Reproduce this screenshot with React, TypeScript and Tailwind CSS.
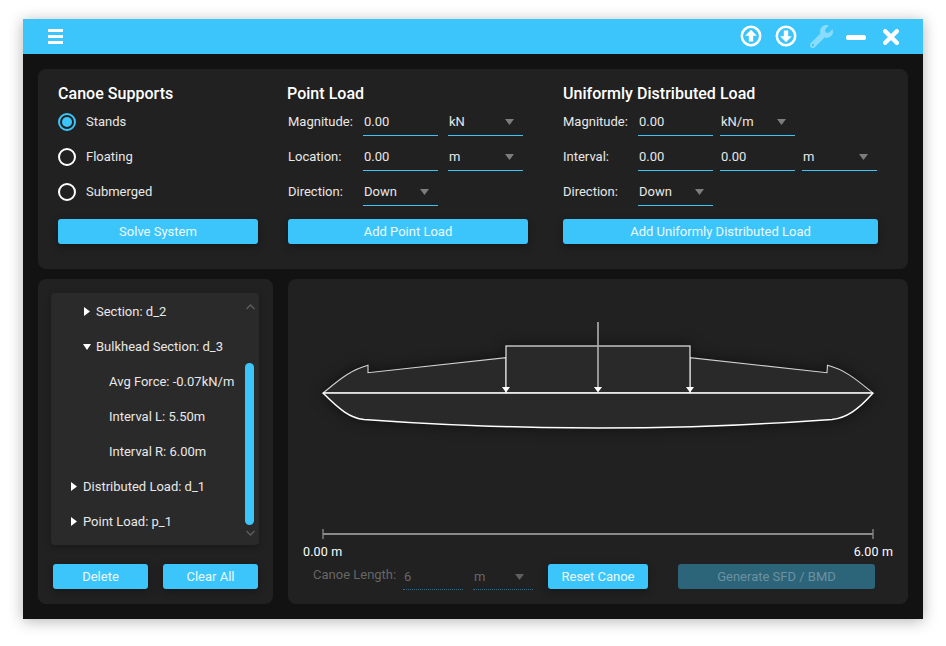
import React from "react";
import { FaWrench } from "react-icons/fa";

const BLUE = "bg-[#3cc5fb]";

const Btn = ({ label, className = "" }: { label: string; className?: string }) => (
  <button
    className={`h-[25px] rounded-[3px] ${BLUE} text-[13px] text-white/90 shadow-[0_3px_8px_rgba(0,0,0,0.3)] ${className}`}
  >
    {label}
  </button>
);

const Caret = ({ dim = false }: { dim?: boolean }) => (
  <svg width="9" height="6" viewBox="0 0 9 6" className="shrink-0">
    <path d="M0 0H9L4.5 6Z" fill={dim ? "#5f5f5f" : "#7d7d7d"} />
  </svg>
);

// text field / combo box with the blue underline
const Field = ({
  value,
  w = "w-[75px]",
  caret = false,
  disabled = false,
  className = "",
}: {
  value: string;
  w?: string;
  caret?: boolean;
  disabled?: boolean;
  className?: string;
}) => (
  <div
    className={`flex h-[26px] items-center justify-between border-b pl-[1px] pr-[9px] text-[13px] ${w} ${
      disabled ? "border-dotted border-[#22708e] text-[#666666]" : "border-[#3cc5fb] pb-[2px] text-[#e8e8e8]"
    } ${className}`}
  >
    <span>{value}</span>
    {caret && <Caret dim={disabled} />}
  </div>
);

const Row = ({ label, children }: { label: string; children: React.ReactNode }) => (
  <div className="mb-[9px] flex h-[26px] items-center text-[13px] text-[#e8e8e8]">
    <span className="w-[75px] pb-[2px]">{label}</span>
    {children}
  </div>
);

const Title = ({ children, className = "" }: { children: React.ReactNode; className?: string }) => (
  <h3 className={`mb-[6px] h-[20px] text-[16px] leading-[20px] font-medium tracking-[0.03px] text-white ${className}`}>
    {children}
  </h3>
);

const Radio = ({ label, checked = false }: { label: string; checked?: boolean }) => (
  <div className="mb-[11px] flex h-[24px] items-center gap-[10px] text-[13px] text-[#e8e8e8]">
    <span
      className={`flex size-[18px] items-center justify-center rounded-full border-2 ${
        checked ? "border-[#3cc5fb]" : "border-white"
      }`}
    >
      {checked && <span className={`size-[10px] rounded-full ${BLUE}`} />}
    </span>
    {label}
  </div>
);

const TreeRow = ({
  label,
  indent,
  arrow,
}: {
  label: string;
  indent: string;
  arrow?: "right" | "down";
}) => (
  <div className={`flex h-[35px] items-center gap-[6px] text-[13px] text-[#e8e8e8] ${indent}`}>
    {arrow === "right" && (
      <svg width="6" height="9" viewBox="0 0 6 9">
        <path d="M0 0L6 4.5L0 9Z" fill="#fff" />
      </svg>
    )}
    {arrow === "down" && (
      <svg width="8" height="6" viewBox="0 0 8 6" className="mr-[-1px] ml-[-1px]">
        <path d="M0 0H8L4 6Z" fill="#fff" />
      </svg>
    )}
    <span>{label}</span>
  </div>
);

const CircleArrow = ({ up }: { up?: boolean }) => (
  <svg width="22" height="22" viewBox="0 0 22 22" fill="none" className="mb-[1px]">
    <circle cx="11" cy="11" r="9.2" stroke="#fff" strokeWidth="2.5" />
    <g transform={up ? undefined : "rotate(180 11 11)"}>
      <path d="M11 4.8L16.8 10.8H13.2V16.6H8.8V10.8H5.2Z" fill="#fff" />
    </g>
  </svg>
);

// canoe drawing, viewBox uses the same coords as the window so points are easy to read off
const CanoeDiagram = () => (
  <svg viewBox="288 279 620 265" className="block h-[265px] w-[620px]" fill="none">
    <g className="drop-shadow-[0_0_7px_rgba(0,0,0,0.55)]">
      <path
        d="M323 393C338 381 350 370 368 365.3V372.7L506 357.7V393Z"
        fill="#292929"
        stroke="#d4d4d4"
        strokeWidth="1.1"
      />
      <path
        d="M873 393C858 381 846 370 827.5 365.3L827 372.7L690 357.7V393Z"
        fill="#292929"
        stroke="#d4d4d4"
        strokeWidth="1.1"
      />
      <rect x="506" y="346" width="184" height="47" fill="#292929" stroke="#e8e8e8" strokeWidth="1.2" />
      <path
        d="M323 393C340 410 350 418 364 419.4C440 425 530 428 598 428C666 428 756 425 832 419.4C846 418 858 410 873 393Z"
        fill="#292929"
      />
      <path
        d="M323 393C340 410 350 418 364 419.4C440 425 530 428 598 428C666 428 756 425 832 419.4C846 418 858 410 873 393"
        stroke="#fff"
        strokeWidth="1.5"
      />
    </g>
    <path d="M323 393H873" stroke="#fff" strokeWidth="1.7" />
    <path d="M598 322V388" stroke="#a8a8a8" strokeWidth="1.7" />
    <path d="M594 387H602L598 392.5Z" fill="#fff" />
    <path d="M502 387H510L506 392.5Z" fill="#fff" />
    <path d="M686 387H694L690 392.5Z" fill="#fff" />
    {/* length scale */}
    <path d="M323 534H873" stroke="#8a8a8a" strokeWidth="1.8" />
    <path d="M323 529V539M873 529V539" stroke="#8a8a8a" strokeWidth="1.3" />
  </svg>
);

export default function App() {
  return (
    <div className="min-h-[646px] bg-white pt-[19px] pl-[23px] font-['Roboto',sans-serif]">
      <div className="h-[600px] w-[900px] bg-[#121212] shadow-[0_2px_14px_rgba(0,0,0,0.3)]">
        {/* title bar */}
        <header className={`flex h-[35px] items-center ${BLUE}`}>
          <div className="mb-[1px] ml-[25px] flex w-[15px] flex-col gap-[3px]">
            <span className="h-[3px] bg-white" />
            <span className="h-[3px] bg-white" />
            <span className="h-[3px] bg-white" />
          </div>
          <div className="ml-auto flex items-center">
            <CircleArrow up />
            <span className="w-[13px]" />
            <CircleArrow />
            <FaWrench className="ml-[13px] size-[23px] text-white/40" />
            <span className="mt-[2px] ml-[13px] h-[5px] w-[20px] rounded-[2px] bg-white" />
            <svg width="16" height="16" viewBox="0 0 16 16" className="mt-[1px] mr-[24px] ml-[17px]">
              <path d="M2.2 2.2L13.8 13.8M13.8 2.2L2.2 13.8" stroke="#fff" strokeWidth="4.4" strokeLinecap="round" />
            </svg>
          </div>
        </header>

        <main className="flex flex-col gap-[10px] px-[15px] pt-[15px]">
          {/* inputs panel */}
          <section className="flex h-[200px] rounded-[8px] bg-[#212121] pt-[15px] pl-[20px]">
            <div className="mr-[30px] w-[200px]">
              <Title>Canoe Supports</Title>
              <Radio label="Stands" checked />
              <Radio label="Floating" />
              <Radio label="Submerged" />
              <Btn label="Solve System" className="mt-[4px] w-[200px]" />
            </div>

            <div className="mr-[35px] w-[240px]">
              <Title className="ml-[-1px]">Point Load</Title>
              <Row label="Magnitude:">
                <Field value="0.00" />
                <Field value="kN" caret className="ml-[10px]" />
              </Row>
              <Row label="Location:">
                <Field value="0.00" />
                <Field value="m" caret className="ml-[10px]" />
              </Row>
              <Row label="Direction:">
                <Field value="Down" caret />
              </Row>
              <Btn label="Add Point Load" className="mt-[4px] w-[240px]" />
            </div>

            <div className="w-[315px]">
              <Title>Uniformly Distributed Load</Title>
              <Row label="Magnitude:">
                <Field value="0.00" />
                <Field value="kN/m" caret className="ml-[7px]" />
              </Row>
              <Row label="Interval:">
                <Field value="0.00" />
                <Field value="0.00" className="ml-[7px]" />
                <Field value="m" caret className="ml-[7px]" />
              </Row>
              <Row label="Direction:">
                <Field value="Down" caret />
              </Row>
              <Btn label="Add Uniformly Distributed Load" className="mt-[4px] w-[315px]" />
            </div>
          </section>

          <div className="flex h-[325px] gap-[15px]">
            {/* load tree */}
            <section className="flex w-[235px] flex-col rounded-[8px] bg-[#212121] pt-[14px]">
              <div className="relative ml-[13px] h-[252px] w-[208px] rounded-[4px] bg-[#2a2a2a] pt-[1px] shadow-[0_2px_6px_rgba(0,0,0,0.25)]">
                <TreeRow label="Section: d_2" indent="pl-[33px]" arrow="right" />
                <TreeRow label="Bulkhead Section: d_3" indent="pl-[33px]" arrow="down" />
                <TreeRow label="Avg Force: -0.07kN/m" indent="pl-[58px]" />
                <TreeRow label="Interval L: 5.50m" indent="pl-[58px]" />
                <TreeRow label="Interval R: 6.00m" indent="pl-[58px]" />
                <TreeRow label="Distributed Load: d_1" indent="pl-[20px]" arrow="right" />
                <TreeRow label="Point Load: p_1" indent="pl-[20px]" arrow="right" />
                <svg width="9" height="6" viewBox="0 0 9 6" fill="none" className="absolute top-[11px] left-[195px]">
                  <path d="M.5 5L4.5 1L8.5 5" stroke="#5e5e5e" strokeWidth="1.3" />
                </svg>
                <span className={`absolute top-[70px] left-[194px] h-[162px] w-[9px] rounded-full ${BLUE}`} />
                <svg width="9" height="6" viewBox="0 0 9 6" fill="none" className="absolute top-[237px] left-[195px]">
                  <path d="M.5 1L4.5 5L8.5 1" stroke="#5e5e5e" strokeWidth="1.3" />
                </svg>
              </div>
              <div className="mt-[19px] flex gap-[15px] pl-[15px]">
                <Btn label="Delete" className="w-[95px]" />
                <Btn label="Clear All" className="w-[95px]" />
              </div>
            </section>

            {/* canvas */}
            <section className="flex w-[620px] flex-col rounded-[8px] bg-[#212121]">
              <CanoeDiagram />
              <div className="flex h-[14px] items-center justify-between px-[15px] pt-[2px] text-[12.5px] tracking-[0.15px] text-white">
                <span>0.00 m</span>
                <span>6.00 m</span>
              </div>
              <div className="mt-[6px] flex items-start pl-[25px]">
                <span className="w-[90px] text-[13px] leading-[22px] text-[#666666]">Canoe Length:</span>
                <Field value="6" w="w-[60px]" disabled />
                <Field value="m" w="w-[60px]" caret disabled className="ml-[10px]" />
                <Btn label="Reset Canoe" className="ml-[15px] w-[100px]" />
                <button className="ml-[30px] h-[25px] w-[197px] rounded-[3px] bg-[#2c6479] text-[13px] text-[#6d929f]">
                  Generate SFD / BMD
                </button>
              </div>
            </section>
          </div>
        </main>
      </div>
    </div>
  );
}
